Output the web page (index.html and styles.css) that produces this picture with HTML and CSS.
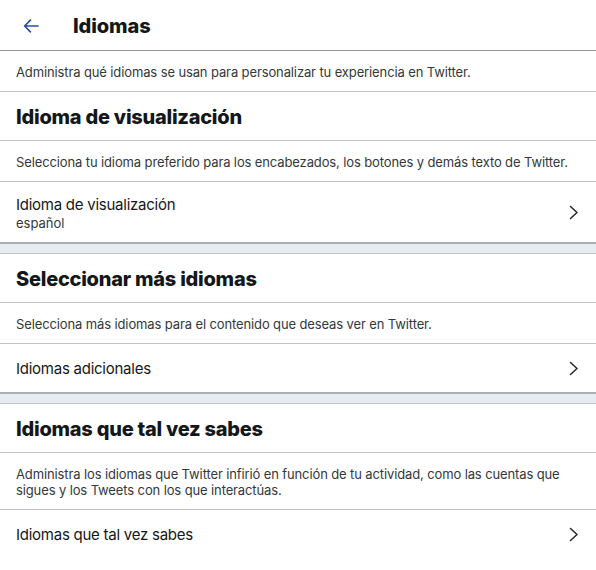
FILE: index.html
```html
<!DOCTYPE html>
<html lang="es">
<head>
<meta charset="utf-8">
<title>Idiomas</title>
<link rel="stylesheet" href="styles.css">
</head>
<body>
<div class="page">
  <header class="topbar">
    <span class="back">
      <svg width="16" height="14" viewBox="0 0 16 14"><path d="M15 7H1.8M7.4 1.2L1.6 7l5.8 5.8" fill="none" stroke="#2a4d9b" stroke-width="1.7" stroke-linecap="round" stroke-linejoin="round"/></svg>
    </span>
    <h1 class="title">Idiomas</h1>
  </header>

  <p class="desc">Administra qué idiomas se usan para personalizar tu experiencia en Twitter.</p>

  <h2 class="heading">Idioma de visualización</h2>
  <p class="desc">Selecciona tu idioma preferido para los encabezados, los botones y demás texto de Twitter.</p>
  <div class="row">
    <div class="row-text">
      <div class="row-label">Idioma de visualización</div>
      <div class="row-sub">español</div>
    </div>
    <svg class="chev" width="10" height="15" viewBox="0 0 10 15"><path d="M1.5 1.5L8 7.5l-6.5 6" fill="none" stroke="#22272b" stroke-width="1.5" stroke-linecap="round" stroke-linejoin="round"/></svg>
  </div>
  <div class="band"></div>

  <h2 class="heading">Seleccionar más idiomas</h2>
  <p class="desc">Selecciona más idiomas para el contenido que deseas ver en Twitter.</p>
  <div class="row">
    <div class="row-text">
      <div class="row-label">Idiomas adicionales</div>
    </div>
    <svg class="chev" width="10" height="15" viewBox="0 0 10 15"><path d="M1.5 1.5L8 7.5l-6.5 6" fill="none" stroke="#22272b" stroke-width="1.5" stroke-linecap="round" stroke-linejoin="round"/></svg>
  </div>
  <div class="band"></div>

  <h2 class="heading">Idiomas que tal vez sabes</h2>
  <p class="desc">Administra los idiomas que Twitter infirió en función de tu actividad, como las cuentas que sigues y los Tweets con los que interactúas.</p>
  <div class="row last">
    <div class="row-text">
      <div class="row-label">Idiomas que tal vez sabes</div>
    </div>
    <svg class="chev" width="10" height="15" viewBox="0 0 10 15"><path d="M1.5 1.5L8 7.5l-6.5 6" fill="none" stroke="#22272b" stroke-width="1.5" stroke-linecap="round" stroke-linejoin="round"/></svg>
  </div>
</div>
</body>
</html>
```

FILE: styles.css
```css
* { box-sizing: border-box; }
html, body { margin: 0; padding: 0; background: #ffffff; }
body {
  font-family: Inter, "Noto Sans", "Liberation Sans", sans-serif;
  color: #14171a;
  -webkit-font-smoothing: antialiased;
}
.page { width: 596px; }

.topbar {
  height: 51px;
  display: flex;
  align-items: center;
  padding: 1px 0 0 23px;
  border-bottom: 1px solid #8f9599;
}
.back { width: 16px; height: 14px; display: flex; }
.title {
  margin: 0 0 0 34px;
  font-size: 20px;
  font-weight: 800;
  line-height: 24px;
  letter-spacing: -0.1px;
}

.desc {
  margin: 0;
  padding: 13px 16px 11px;
  font-size: 13px;
  line-height: 16px;
  letter-spacing: -0.12px;
  color: #33383c;
  border-bottom: 1px solid #bfc4c8;
}

.heading {
  margin: 0;
  padding: 13px 16px 11px;
  font-size: 20px;
  line-height: 24px;
  font-weight: 800;
  letter-spacing: -0.25px;
  border-bottom: 1px solid #bfc4c8;
}

.row {
  min-height: 48px;
  display: flex;
  align-items: center;
  justify-content: space-between;
  padding: 13px 17px 11px 16px;
}
.row-label { font-size: 15px; line-height: 20px; letter-spacing: -0.25px; color: #14171a; }
.row-sub { font-size: 13px; line-height: 16px; color: #33383c; }
.chev { flex: none; margin-top: -2px; }

.band {
  height: 12px;
  background: #e6ecf0;
  border-top: 2px solid #a9afb3;
  border-bottom: 1px solid #c2c7cb;
}
```
